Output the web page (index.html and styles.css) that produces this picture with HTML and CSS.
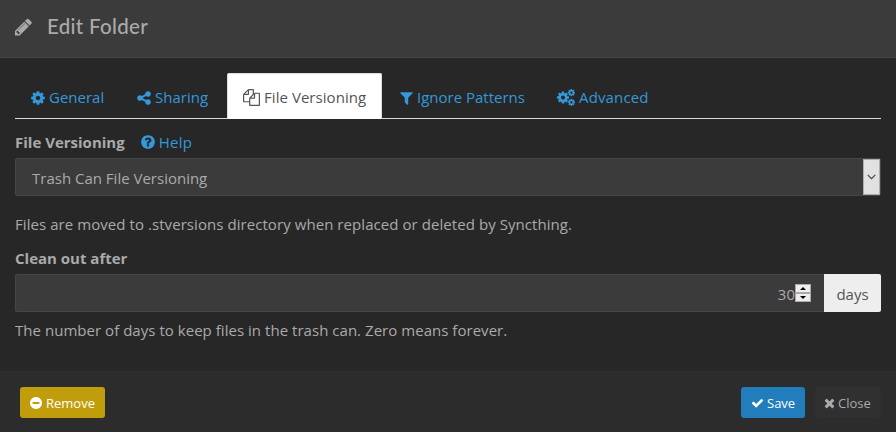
FILE: index.html
```html
<!DOCTYPE html>
<html lang="en">
<head>
<meta charset="utf-8">
<title>Edit Folder</title>
<link rel="stylesheet" href="styles.css">
</head>
<body>
<svg class="defs" aria-hidden="true">
<symbol id="cog" viewBox="128 0 1536 1792"><path id="gear" d="M1152 896q0-106-75-181t-181-75-181 75-75 181 75 181 181 75 181-75 75-181zm512-109v222q0 12-8 23t-20 13l-185 28q-19 54-39 91 35 50 107 138 10 12 10 25t-9 23q-27 37-99 108t-94 71q-12 0-26-9l-138-108q-44 23-91 38-16 136-29 186-7 28-36 28h-222q-14 0-24.500-8.500t-11.500-21.500l-28-184q-49-16-90-37l-141 107q-10 9-25 9-14 0-25-11-126-114-165-168-7-10-7-23 0-12 8-23 15-21 51-66.500t54-70.500q-27-50-41-99l-183-27q-13-2-21-12.500t-8-23.500v-222q0-12 8-23t19-13l186-28q14-46 39-92-40-57-107-138-10-12-10-24 0-10 9-23 26-36 98.500-107.500t94.500-71.500q13 0 26 10l138 107q44-23 91-38 16-136 29-186 7-28 36-28h222q14 0 24.500 8.500t11.500 21.500l28 184q49 16 90 37l142-107q9-9 24-9 13 0 25 10 129 119 165 170 7 8 7 22 0 12-8 23-15 21-51 66.500t-54 70.500q26 50 41 98l183 28q13 2 21 12.500t8 23.500z"/></symbol>
<symbol id="cogs" viewBox="0 0 1920 1792"><use href="#gear" transform="translate(-107 149) scale(.834)"/><use href="#gear" transform="translate(1088 -64) scale(.5)"/><use href="#gear" transform="translate(1088 960) scale(.5)"/></symbol>
<symbol id="share" viewBox="128 0 1536 1792"><path d="M1344 1024q133 0 226.500 93.500t93.500 226.500-93.500 226.500-226.500 93.500-226.500-93.500-93.500-226.500q0-12 2-34l-360-180q-92 86-218 86-133 0-226.500-93.500t-93.500-226.500 93.500-226.500 226.500-93.500q126 0 218 86l360-180q-2-22-2-34 0-133 93.500-226.500t226.500-93.500 226.500 93.500 93.500 226.500-93.500 226.500-226.500 93.500q-126 0-218-86l-360 180q2 22 2 34t-2 34l360 180q92-86 218-86z"/></symbol>
<symbol id="files" viewBox="0 0 1792 1792"><path d="M1696 384q40 0 68 28t28 68v1216q0 40-28 68t-68 28h-960q-40 0-68-28t-28-68v-288h-544q-40 0-68-28t-28-68v-672q0-40 20-88t48-76l408-408q28-28 76-48t88-20h416q40 0 68 28t28 68v328q68-40 128-40h416zm-544 213l-299 299h299v-299zm-640-384l-299 299h299v-299zm196 647l316-316v-416h-384v416q0 40-28 68t-68 28h-416v640h512v-256q0-40 20-88t48-76zm956 804v-1152h-384v416q0 40-28 68t-68 28h-416v640h896z"/></symbol>
<symbol id="filter" viewBox="192 0 1408 1792"><path d="M1595 295q17 41-14 70l-493 493v742q0 42-39 59-13 5-25 5-27 0-45-19l-256-256q-19-19-19-45v-486l-493-493q-31-29-14-70 17-39 59-39h1280q42 0 59 39z"/></symbol>
<symbol id="check" viewBox="0 0 1792 1792"><path d="M1671 566q0 40-28 68l-724 724-136 136q-28 28-68 28t-68-28l-136-136-362-362q-28-28-28-68t28-68l136-136q28-28 68-28t68 28l294 295 656-657q28-28 68-28t68 28l136 136q28 28 28 68z"/></symbol>
<symbol id="times" viewBox="192 0 1408 1792"><path d="M1490 1322q0 40-28 68l-136 136q-28 28-68 28t-68-28l-294-294-294 294q-28 28-68 28t-68-28l-136-136q-28-28-28-68t28-68l294-294-294-294q-28-28-28-68t28-68l136-136q28-28 68-28t68 28l294 294 294-294q28-28 68-28t68 28l136 136q28 28 28 68t-28 68l-294 294 294 294q28 28 28 68z"/></symbol>
<symbol id="minus" viewBox="128 0 1536 1792"><path d="M1344 960v-128q0-26-19-45t-45-19h-768q-26 0-45 19t-19 45v128q0 26 19 45t45 19h768q26 0 45-19t19-45zm320-64q0 209-103 385.500t-279.500 279.500-385.500 103-385.500-103-279.500-279.500-103-385.500 103-385.500 279.500-279.500 385.500-103 385.500 103 279.500 279.500 103 385.500z"/></symbol>
<symbol id="question" viewBox="128 0 1536 1792"><path d="M1024 1376v-192q0-14-9-23t-23-9h-192q-14 0-23 9t-9 23v192q0 14 9 23t23 9h192q14 0 23-9t9-23zm256-672q0-88-55.500-163t-138.500-116-170-41q-243 0-371 213-15 24 8 42l132 100q7 6 19 6 16 0 25-12 53-68 86-92 34-24 86-24 48 0 85.500 26t37.500 59q0 38-20 61t-68 45q-63 28-115.500 86.500t-52.500 125.500v36q0 14 9 23t23 9h192q14 0 23-9t9-23q0-19 21.500-49.500t54.500-49.500q32-18 49-28.500t46-35 44.500-48 28-60.500 12.500-81zm384 192q0 209-103 385.500t-279.500 279.500-385.500 103-385.500-103-279.500-279.500-103-385.500 103-385.500 279.500-279.500 385.500-103 385.500 103 279.500 279.500 103 385.500z"/></symbol>
<symbol id="pencil" viewBox="128 0 1536 1792"><path d="M491 1536l91-91-235-235-91 91v107h128v128h107zm523-928q0-22-22-22-10 0-17 7l-542 542q-7 7-7 17 0 22 22 22 10 0 17-7l542-542q7-7 7-17zm-54-192l416 416-832 832h-416v-416zm683 96q0 53-37 90l-166 166-416-416 166-165q36-38 90-38 53 0 91 38l235 234q37 39 37 91z"/></symbol>
</svg>
<div class="modal">
  <header class="head"><svg class="pencil"><use href="#pencil"/></svg><h1 class="title">Edit Folder</h1></header>
  <main class="body">
    <nav class="tabs">
      <a class="tab general"><svg class="icon"><use href="#cog"/></svg><span>General</span></a>
      <a class="tab sharing"><svg class="icon"><use href="#share"/></svg><span>Sharing</span></a>
      <a class="tab active"><svg class="icon wide"><use href="#files"/></svg><span>File Versioning</span></a>
      <a class="tab ignore"><svg class="icon narrow"><use href="#filter"/></svg><span>Ignore Patterns</span></a>
      <a class="tab advanced"><svg class="icon wider"><use href="#cogs"/></svg><span>Advanced</span></a>
    </nav>
    <div class="label-row"><strong class="label-a">File Versioning</strong><a class="help"><svg class="icon"><use href="#question"/></svg><span>Help</span></a></div>
    <div class="select"><span>Trash Can File Versioning</span><span class="arrow"><svg viewBox="0 0 9 6"><path d="M.7.9l3.800 3.800L8.300.9"/></svg></span></div>
    <p class="desc">Files are moved to .stversions directory when replaced or deleted by Syncthing.</p>
    <div class="label-row second"><strong>Clean out after</strong></div>
    <div class="group">
      <div class="number"><span>30</span><span class="spin"><i class="step"><svg viewBox="0 0 8 4"><path d="M0 4L4 0l4 4z"/></svg></i><i class="step"><svg viewBox="0 0 8 4"><path d="M0 0l4 4 4-4z"/></svg></i></span></div>
      <div class="addon"><span>days</span></div>
    </div>
    <p class="hint">The number of days to keep files in the trash can. Zero means forever.</p>
  </main>
  <footer class="foot">
    <button class="btn remove"><svg><use href="#minus"/></svg><span>Remove</span></button>
    <button class="btn save"><svg class="ck"><use href="#check"/></svg><span>Save</span></button>
    <button class="btn close"><svg class="tm"><use href="#times"/></svg><span>Close</span></button>
  </footer>
</div>
</body>
</html>
```

FILE: styles.css
```css
* { box-sizing: border-box; }
body { margin: 0; background: #272727; color: #aaa; font: 15px/20px "Open Sans", "Noto Sans", sans-serif; overflow: hidden; }
svg { fill: currentColor; display: block; flex: none; }
.defs { position: absolute; width: 0; height: 0; }
.modal { height: 432px; display: flex; flex-direction: column; white-space: nowrap; }
.head { height: 58px; background: #3b3b3b; border-bottom: 1px solid #464646; display: flex; align-items: center; padding: 0 15px 4px; }
.pencil { width: 17px; height: 20px; }
.title { margin: 0 0 2px 15px; font: 500 20.500px/24px Lato, sans-serif; letter-spacing: .3px; }
.body { flex: 1; padding: 15px 15px 0; }
.tabs { display: flex; height: 46px; border-bottom: 1px solid #ddd; }
.tab { display: flex; align-items: center; padding: 2px 15px 0; height: 46px; gap: 4px; color: #3498db; border: 1px solid transparent; border-bottom: 0; border-radius: 2px 2px 0 0; }
.tab span { margin-top: -1px; }
.general { width: 106px; }
.sharing { width: 106px; }
.active { width: 155px; background: #fff; border-color: #ddd; color: #555; letter-spacing: .05px; }
.ignore { width: 159px; padding-left: 17px; }
.advanced { letter-spacing: .15px; }
.icon { width: 14px; height: 16px; }
.wide { width: 17px; height: 17px; }
.narrow { width: 13px; }
.wider { width: 18px; height: 17px; }
.label-row { display: flex; align-items: center; height: 20px; margin: 13px 0 6px; }
.help { display: flex; align-items: center; gap: 4px; color: #3498db; margin-left: 16px; letter-spacing: .3px; }
.select { display: flex; align-items: center; justify-content: space-between; height: 38px; border: 1px solid #464646; border-radius: 2px; background: #3b3b3b; padding: 2px 0 0 16px; width: 866px; }
.arrow { width: 17px; height: 36px; margin-top: -2px; background: #e1e1e1; border: 1px solid #adadad; display: grid; place-items: center; }
.arrow svg { width: 9px; height: 6px; fill: none; stroke: #444; stroke-width: 1.200; }
.desc { margin: 18px 0 0; height: 20px; letter-spacing: .065px; }
.second { margin: 14px 0 6px; }
.group { display: flex; height: 38px; width: 866px; }
.number { flex: 1; display: flex; align-items: center; justify-content: flex-end; background: #3b3b3b; border: 1px solid #464646; border-right: 0; border-radius: 2px 0 0 2px; padding: 2px 13px 0 0; }
.spin { width: 16px; height: 18px; margin-top: -2px; display: flex; flex-direction: column; }
.step { flex: 1; background: #eee; border: 1px solid #aaa; display: grid; place-items: center; }
.step svg { width: 6px; height: 3px; fill: #000; }
.addon { width: 57px; background: #eee; color: #555; display: grid; place-items: center; padding-top: 2px; border-radius: 0 2px 2px 0; }
.hint { margin: 8px 0 0; height: 20px; letter-spacing: .035px; }
.foot { height: 61px; background: #2c2c2c; border-top: 1px solid #303030; display: flex; padding: 15px 15px 0 20px; }
.btn { display: flex; align-items: center; height: 31px; border: 0; border-radius: 3px; padding: 1px 0 0 10px; gap: 4px; color: #fff; font: 13px/18px "Open Sans", sans-serif; }
.btn svg { width: 12px; height: 14px; }
.btn .ck { width: 13px; margin-right: -1px; }
.btn .tm { width: 11px; margin: 0 -1px 0 -1px; }
.remove { width: 85px; background: #c29d0b; }
.save { width: 64px; background: #217dbb; margin-left: auto; }
.close { width: 66px; background: #303030; color: #aaa; margin-left: 10px; }
```
